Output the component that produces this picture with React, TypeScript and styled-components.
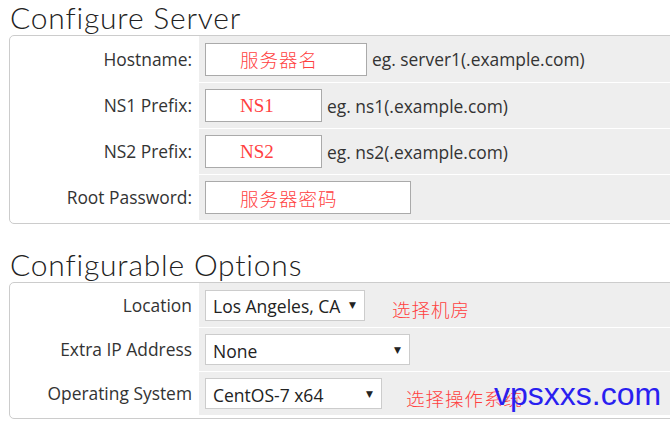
import React from 'react';
import styled, { createGlobalStyle } from 'styled-components';

const GlobalStyle = createGlobalStyle`
  html, body {
    margin: 0;
    padding: 0;
    background: #fff;
    overflow: hidden;
  }
  body {
    font-family: "Open Sans", "Liberation Sans", sans-serif;
    color: #333;
  }
`

interface FieldRow {
  label: string
  width: number
  value: string
  serif?: boolean
  hint?: string
}

const serverRows: FieldRow[] = [
  { label: 'Hostname:', width: 162, value: '服务器名', hint: 'eg. server1(.example.com)' },
  { label: 'NS1 Prefix:', width: 117, value: 'NS1', serif: true, hint: 'eg. ns1(.example.com)' },
  { label: 'NS2 Prefix:', width: 117, value: 'NS2', serif: true, hint: 'eg. ns2(.example.com)' },
  { label: 'Root Password:', width: 206, value: '服务器密码' },
]

interface OptionRow {
  label: string
  width: number
  value: string
  note?: string
  noteOffset?: number
}

const optionRows: OptionRow[] = [
  { label: 'Location', width: 160, value: 'Los Angeles, CA', note: '选择机房', noteOffset: 27 },
  { label: 'Extra IP Address', width: 205, value: 'None' },
  { label: 'Operating System', width: 177, value: 'CentOS-7 x64', note: '选择操作系统', noteOffset: 24 },
]

export default function App() {
  return (
    <Page>
      <GlobalStyle />
      <Heading>Configure Server</Heading>
      <Panel>
        {serverRows.map(row => (
          <Row key={row.label} height={46}>
            <Label>{row.label}</Label>
            <Field>
              <TextBox style={{ width: row.width }}>
                <Value serif={row.serif}>{row.value}</Value>
              </TextBox>
              {row.hint && <Hint>{row.hint}</Hint>}
            </Field>
          </Row>
        ))}
      </Panel>

      <Heading spaced>Configurable Options</Heading>
      <Panel>
        {optionRows.map(row => (
          <Row key={row.label} height={44}>
            <Label>{row.label}</Label>
            <Field>
              <SelectBox style={{ width: row.width }}>
                <span>{row.value}</span>
                <Arrow>▼</Arrow>
              </SelectBox>
              {row.note && <Note style={{ marginLeft: row.noteOffset }}>{row.note}</Note>}
            </Field>
          </Row>
        ))}
      </Panel>
      <Watermark>vpsxxs.com</Watermark>
    </Page>
  )
}

const Page = styled.div`
  position: relative;
  width: 670px;
  height: 421px;
  padding-left: 9px;
  box-sizing: border-box;
`

const Heading = styled.h2<{ spaced?: boolean }>`
  margin: ${props => (props.spaced ? '23px' : '0')} 0 0 1px;
  font-family: Lato, "Open Sans", sans-serif;
  font-weight: 300;
  font-size: 30px;
  line-height: 35px;
  height: 35px;
  color: #222;
  letter-spacing: 0.8px;
`

const Panel = styled.div`
  width: 700px;
  border: 1px solid #ccc;
  border-radius: 5px;
  padding-bottom: 3px;
  background: #fff;
`

const Row = styled.div<{ height: number }>`
  display: grid;
  grid-template-columns: 189px 1fr;
  height: ${props => props.height}px;
  & + & > div:last-child {
    border-top: 1px solid #fff;
  }
`

const Label = styled.div`
  display: flex;
  align-items: center;
  justify-content: flex-end;
  padding-right: 7px;
  font-size: 17.4px;
  color: #333;
`

const Field = styled.div`
  display: flex;
  align-items: center;
  background: #eee;
  padding-left: 6px;
  box-sizing: border-box;
`

const TextBox = styled.div`
  height: 33px;
  border: 1px solid #aaa;
  background: #fff;
  box-sizing: border-box;
  display: flex;
  align-items: center;
  padding-left: 34px;
`

const Value = styled.span<{ serif?: boolean }>`
  color: #ff4040;
  font-family: ${props =>
    props.serif ? '"Liberation Serif", serif' : '"Noto Sans CJK SC", sans-serif'};
  font-size: ${props => (props.serif ? '19px' : '18.5px')};
  font-weight: 300;
  letter-spacing: ${props => (props.serif ? '0' : '1px')};
`

const Hint = styled.span`
  margin-left: 5px;
  font-size: 17.4px;
  color: #333;
`

const SelectBox = styled.div`
  height: 31px;
  border: 1px solid #ccc;
  background: #fff;
  box-sizing: border-box;
  display: flex;
  align-items: center;
  justify-content: space-between;
  padding: 0 8px 0 7px;
  font-size: 17.5px;
  color: #222;
  span:first-child {
    margin-top: 2px;
  }
`

const Arrow = styled.span`
  font-size: 9px;
  color: #222;
  font-family: "DejaVu Sans", sans-serif;
`

const Note = styled.span`
  color: #ff4040;
  font-family: "Noto Sans CJK SC", sans-serif;
  font-weight: 300;
  font-size: 18.5px;
  letter-spacing: 1px;
  margin-top: 8px;
`

const Watermark = styled.div`
  position: absolute;
  left: 494px;
  top: 374px;
  font-family: "Liberation Sans", Arial, sans-serif;
  font-size: 32px;
  color: #2a1ff0;
  line-height: 40px;
`
